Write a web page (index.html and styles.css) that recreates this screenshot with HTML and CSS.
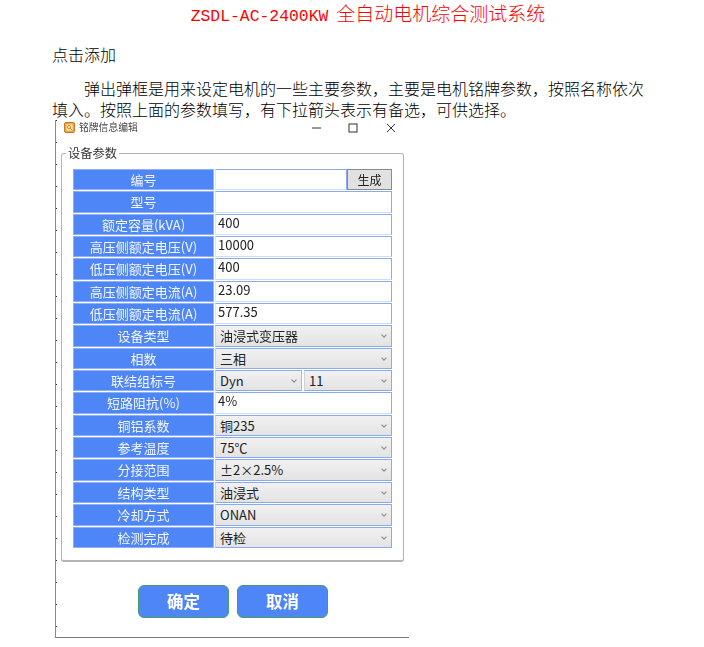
FILE: index.html
```html
<!DOCTYPE html>
<html lang="zh">
<head>
<meta charset="utf-8">
<title>ZSDL-AC-2400KW 全自动电机综合测试系统</title>
<link rel="stylesheet" href="styles.css">
</head>
<body>
<main class="page">
  <h1 class="title"><span class="title-latin">ZSDL-AC-2400KW</span>全自动电机综合测试系统</h1>
  <p class="lead">点击添加</p>
  <p class="para">弹出弹框是用来设定电机的一些主要参数，主要是电机铭牌参数，按照名称依次填入。按照上面的参数填写，有下拉箭头表示有备选，可供选择。</p>
  <section class="dialog">
    <header class="titlebar">
      <svg class="app-icon" viewBox="0 0 11 11"><rect x="0.5" y="0.5" width="10" height="10" rx="1.5" fill="#f2a33a" stroke="#c9781f"/><rect x="2.5" y="2.5" width="6" height="6" fill="#fff3d8"/><circle cx="5" cy="5" r="1.6" fill="none" stroke="#d9822b"/><path d="M6.2 6.2 8 8" stroke="#d9822b"/></svg>
      <span class="win-title">铭牌信息编辑</span>
      <svg class="win-btn btn-min" viewBox="0 0 10 10"><path d="M0 5h9" stroke="#333"/></svg>
      <svg class="win-btn btn-max" viewBox="0 0 10 10"><rect x="1" y="1" width="8" height="8" fill="none" stroke="#333"/></svg>
      <svg class="win-btn btn-close" viewBox="0 0 10 10"><path d="M1 1l8 8M9 1l-8 8" stroke="#333"/></svg>
    </header>
    <fieldset class="group">
      <legend class="legend">设备参数</legend>
      <div class="form">
        <div class="label">编号</div>
        <div class="value split"><div class="input"></div><div class="gen">生成</div></div>
        <div class="label">型号</div><div class="value input"></div>
        <div class="label">额定容量(kVA)</div><div class="value input">400</div>
        <div class="label">高压侧额定电压(V)</div><div class="value input">10000</div>
        <div class="label">低压侧额定电压(V)</div><div class="value input">400</div>
        <div class="label">高压侧额定电流(A)</div><div class="value input">23.09</div>
        <div class="label">低压侧额定电流(A)</div><div class="value input">577.35</div>
        <div class="label">设备类型</div><div class="value select">油浸式变压器</div>
        <div class="label">相数</div><div class="value select">三相</div>
        <div class="label">联结组标号</div>
        <div class="value pair"><div class="select">Dyn</div><div class="select">11</div></div>
        <div class="label">短路阻抗(%)</div><div class="value input">4%</div>
        <div class="label">铜铝系数</div><div class="value select">铜235</div>
        <div class="label">参考温度</div><div class="value select">75℃</div>
        <div class="label">分接范围</div><div class="value select">±2×2.5%</div>
        <div class="label">结构类型</div><div class="value select">油浸式</div>
        <div class="label">冷却方式</div><div class="value select">ONAN</div>
        <div class="label">检测完成</div><div class="value select">待检</div>
      </div>
    </fieldset>
    <footer class="actions">
      <div class="action">确定</div>
      <div class="action">取消</div>
    </footer>
  </section>
</main>
</body>
</html>
```
FILE: styles.css
```css
* { box-sizing: border-box; }
html, body { margin: 0; padding: 0; background: #fff; }
body {
  font-family: "Noto Sans CJK SC", "Liberation Sans", sans-serif;
  color: #000;
  overflow: hidden;
}
.page { width: 704px; height: 647px; padding: 0 20px 0 52px; }
.title {
  margin: 0;
  height: 25px;
  font-size: 19px;
  line-height: 25px;
  font-weight: 300;
  color: #f00;
  text-align: center;
  white-space: nowrap;
}
.title-latin {
  margin-right: 8px;
  font-family: "Liberation Mono", monospace;
  font-size: 16.4px;
  font-weight: 400;
}
.lead {
  margin: 18px 0 0;
  font-size: 16px;
  line-height: 22px;
  font-weight: 300;
}
.para {
  margin: 13px 0 0;
  width: 600px;
  font-size: 16px;
  line-height: 21px;
  font-weight: 300;
  text-indent: 32px;
}
.dialog {
  width: 354px;
  height: 518px;
  margin: 0 0 0 3px;
  border-left: 1px solid #8a8a8a;
  border-bottom: 1px solid #777;
  background-image: repeating-linear-gradient(to bottom, #333 0 1px, transparent 1px 22px);
  background-size: 1px 100%;
  background-repeat: no-repeat;
  color: #333;
  filter: blur(0.35px);
}
.titlebar { display: flex; align-items: center; height: 15px; padding-left: 8px; }
.app-icon { width: 11px; height: 11px; flex: none; }
.win-title { margin-left: 4px; font-size: 9.8px; line-height: 15px; color: #444; }
.win-btn { width: 10px; height: 10px; flex: none; }
.btn-min { margin-left: 174px; }
.btn-max { margin-left: 26px; }
.btn-close { margin-left: 28px; }
.group {
  width: 343px;
  height: 416px;
  margin: 11px 0 0 5px;
  padding: 9px 0 0 11px;
  border: 1px solid #b4b4b4;
  border-bottom-width: 2px;
  border-radius: 3px;
}
.legend {
  margin-left: -7px;
  padding: 0 2px;
  font-size: 12.25px;
  line-height: 14px;
  color: #333;
}
.form {
  display: grid;
  grid-template-columns: 141px 177px;
  grid-auto-rows: 21.35px;
  row-gap: 1px;
  column-gap: 1px;
  width: 319px;
}
.label {
  background: #4f86f7;
  border: 1px solid #8fb0f5;
  color: #f4f8ff;
  font-size: 13px;
  line-height: 20px;
  text-align: center;
  white-space: nowrap;
}
.value {
  font-size: 13px;
  line-height: 15px;
  color: #222;
  white-space: nowrap;
}
.input {
  background: #fff;
  border: 1px solid #8aaaf0;
  border-left-color: #dfe6f5;
  border-bottom-color: #cfdcf8;
  padding: 0 2px;
}
.select {
  position: relative;
  border: 1px solid #8aaaf0;
  border-left-color: #d4d4d4;
  background: linear-gradient(#f1f1f1, #e3e3e3);
  padding: 0 4px;
  line-height: 19px;
}
.select::after {
  content: "";
  position: absolute;
  right: 5px;
  top: 7px;
  width: 3px;
  height: 3px;
  border-right: 1px solid #888;
  border-bottom: 1px solid #888;
  transform: rotate(45deg);
}
.split { display: flex; }
.split .input { width: 132px; flex: none; }
.gen {
  flex: 1;
  background: #e1e1e1;
  border: 1px solid #8a8a8a;
  text-align: center;
  font-size: 12px;
  line-height: 19px;
}
.pair { display: flex; gap: 2px; }
.pair .select:first-child { width: 87px; flex: none; border-right-color: #bbb; }
.pair .select:last-child { flex: 1; }
.actions { display: flex; gap: 8px; margin-top: 23px; padding-left: 82px; }
.action {
  width: 91px;
  height: 33px;
  background: #4f86f7;
  border: 1px solid #45a060;
  border-radius: 6px;
  color: #fff;
  font-size: 16.5px;
  font-weight: 700;
  line-height: 31px;
  text-align: center;
}
```
